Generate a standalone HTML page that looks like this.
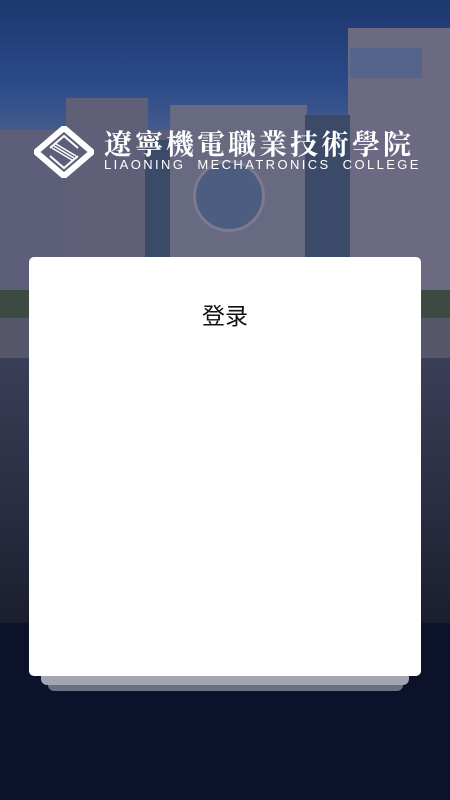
<!DOCTYPE html>
<html><head><meta charset="utf-8"><style>
*{margin:0;padding:0;box-sizing:border-box}
body{width:450px;height:800px;overflow:hidden;position:relative;background:#0b1229;font-family:"Liberation Sans","Noto Sans CJK SC",sans-serif}
.abs{position:absolute}
</style></head><body>
<div class="abs" style="left:0;top:0;width:450px;height:140px;background:linear-gradient(180deg,#1d376f 0%,#2b4a88 60%,#4a5f90 100%)"></div>
<div class="abs" style="left:0;top:130px;width:450px;height:170px;background:#5d5f7a"></div>
<div class="abs" style="left:66px;top:98px;width:82px;height:200px;background:#5f6078"></div>
<div class="abs" style="left:170px;top:105px;width:137px;height:195px;background:#686a82"></div>
<div class="abs" style="left:348px;top:28px;width:102px;height:272px;background:#6b6a82"></div>
<div class="abs" style="left:350px;top:48px;width:72px;height:30px;background:#55648a"></div>
<div class="abs" style="left:305px;top:115px;width:45px;height:185px;background:#3c4a6a"></div>
<div class="abs" style="left:145px;top:140px;width:25px;height:160px;background:#3c4a6a"></div>
<div class="abs" style="left:193px;top:160px;width:72px;height:72px;border-radius:50%;background:#4c5d80;border:3px solid #7a7a92"></div>
<div class="abs" style="left:0;top:290px;width:450px;height:30px;background:#3d4a44"></div>
<div class="abs" style="left:0;top:318px;width:450px;height:42px;background:#55566a"></div>
<div class="abs" style="left:0;top:358px;width:450px;height:265px;background:linear-gradient(180deg,#3a3f58 0%,#272c40 60%,#1a1e2e 100%)"></div>
<svg class="abs" style="left:34px;top:126px" width="60" height="52" viewBox="0 0 60 52">
<path d="M30 2 L58 26 L30 50 L2 26 Z" fill="none" stroke="#fff" stroke-width="6" stroke-linejoin="round"/>
<path d="M16 22 L30 10 L44 22 M16 30 L30 42 L44 30" fill="none" stroke="#fff" stroke-width="2"/>
<path d="M20 20 L40 32 M22 18 L42 30 M18 22 L38 34" stroke="#fff" stroke-width="1.5"/>
</svg>
<div class="abs" style="left:104px;top:126px;width:320px;color:#fff;font-family:'Noto Serif CJK SC',serif;font-weight:bold;font-size:28px;line-height:34px;letter-spacing:3px;white-space:nowrap">遼寧機電職業技術學院</div>
<div class="abs" style="left:104px;top:157px;color:#fff;font-size:13px;letter-spacing:2.4px;white-space:nowrap;line-height:16px">LIAONING&nbsp; MECHATRONICS&nbsp; COLLEGE</div>
<div class="abs" style="left:48px;top:670px;width:355px;height:21px;background:#6b7083;border-radius:6px"></div>
<div class="abs" style="left:41px;top:665px;width:368px;height:20px;background:#a4a5b2;border-radius:6px"></div>
<div class="abs" style="left:29px;top:257px;width:392px;height:419px;background:#fff;border-radius:5px"></div>
<div class="abs" style="left:29px;top:301px;width:392px;text-align:center;font-size:23px;line-height:30px;color:#111">登录</div>
</body></html>
